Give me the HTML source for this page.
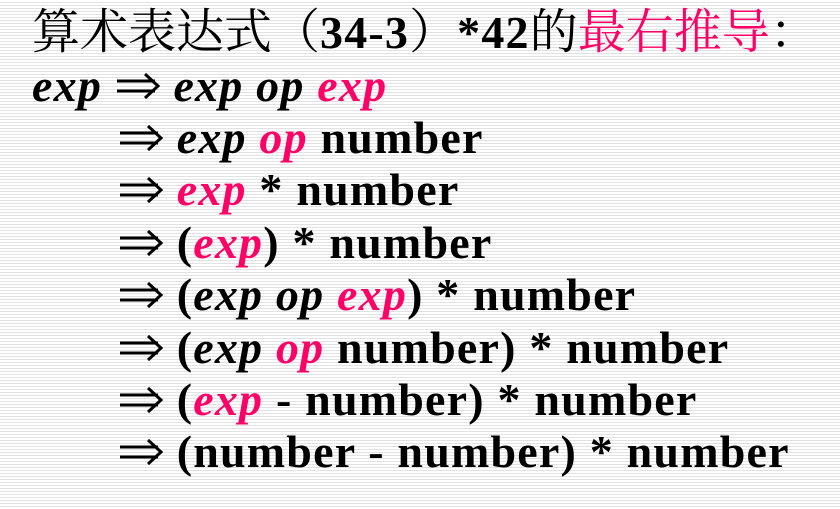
<html><head><style>
body{margin:0;width:840px;height:509px;overflow:hidden;background:repeating-linear-gradient(180deg,#fff 0,#fff 2px,#e2e2e2 2px,#e2e2e2 3px);font-family:"Liberation Serif","Noto Serif CJK SC",serif;}
.l{position:absolute;font-size:46px;font-weight:bold;white-space:nowrap;line-height:1;color:#000;letter-spacing:1.2px}
i{font-style:italic}
.p{color:#ff0066}
.t{font-weight:normal;font-family:"Noto Serif CJK SC",serif;font-size:48px;letter-spacing:0}
svg{display:inline-block;vertical-align:middle;margin-top:-8px}
</style></head><body>
<div class="l" style="left:32px;top:4px"><span class="t">算术表达式（</span>34-3<span class="t">）</span>*42<span class="t">的</span><span class="t p">最右推导</span><span class="t">：</span></div>
<div class="l" style="left:32px;top:63px"><i>exp</i> <svg width="46" height="30" viewBox="0 0 46 30"><path d="M2 10H40M2 20H40M30 3L43 15L30 27" fill="none" stroke="#000" stroke-width="3"/></svg> <i>exp op <span class="p">exp</span></i></div>
<div class="l" style="left:118px;top:115px"><svg width="46" height="30" viewBox="0 0 46 30"><path d="M2 10H40M2 20H40M30 3L43 15L30 27" fill="none" stroke="#000" stroke-width="3"/></svg> <i>exp <span class="p">op</span></i> number</div>
<div class="l" style="left:118px;top:167px"><svg width="46" height="30" viewBox="0 0 46 30"><path d="M2 10H40M2 20H40M30 3L43 15L30 27" fill="none" stroke="#000" stroke-width="3"/></svg> <i class="p">exp</i> * number</div>
<div class="l" style="left:118px;top:220px"><svg width="46" height="30" viewBox="0 0 46 30"><path d="M2 10H40M2 20H40M30 3L43 15L30 27" fill="none" stroke="#000" stroke-width="3"/></svg> (<i class="p">exp</i>) * number</div>
<div class="l" style="left:118px;top:272px"><svg width="46" height="30" viewBox="0 0 46 30"><path d="M2 10H40M2 20H40M30 3L43 15L30 27" fill="none" stroke="#000" stroke-width="3"/></svg> (<i>exp op <span class="p">exp</span></i>) * number</div>
<div class="l" style="left:118px;top:325px"><svg width="46" height="30" viewBox="0 0 46 30"><path d="M2 10H40M2 20H40M30 3L43 15L30 27" fill="none" stroke="#000" stroke-width="3"/></svg> (<i>exp <span class="p">op</span></i> number) * number</div>
<div class="l" style="left:118px;top:377px"><svg width="46" height="30" viewBox="0 0 46 30"><path d="M2 10H40M2 20H40M30 3L43 15L30 27" fill="none" stroke="#000" stroke-width="3"/></svg> (<i class="p">exp</i> - number) * number</div>
<div class="l" style="left:118px;top:429px"><svg width="46" height="30" viewBox="0 0 46 30"><path d="M2 10H40M2 20H40M30 3L43 15L30 27" fill="none" stroke="#000" stroke-width="3"/></svg> (number - number) * number</div>
</body></html>
